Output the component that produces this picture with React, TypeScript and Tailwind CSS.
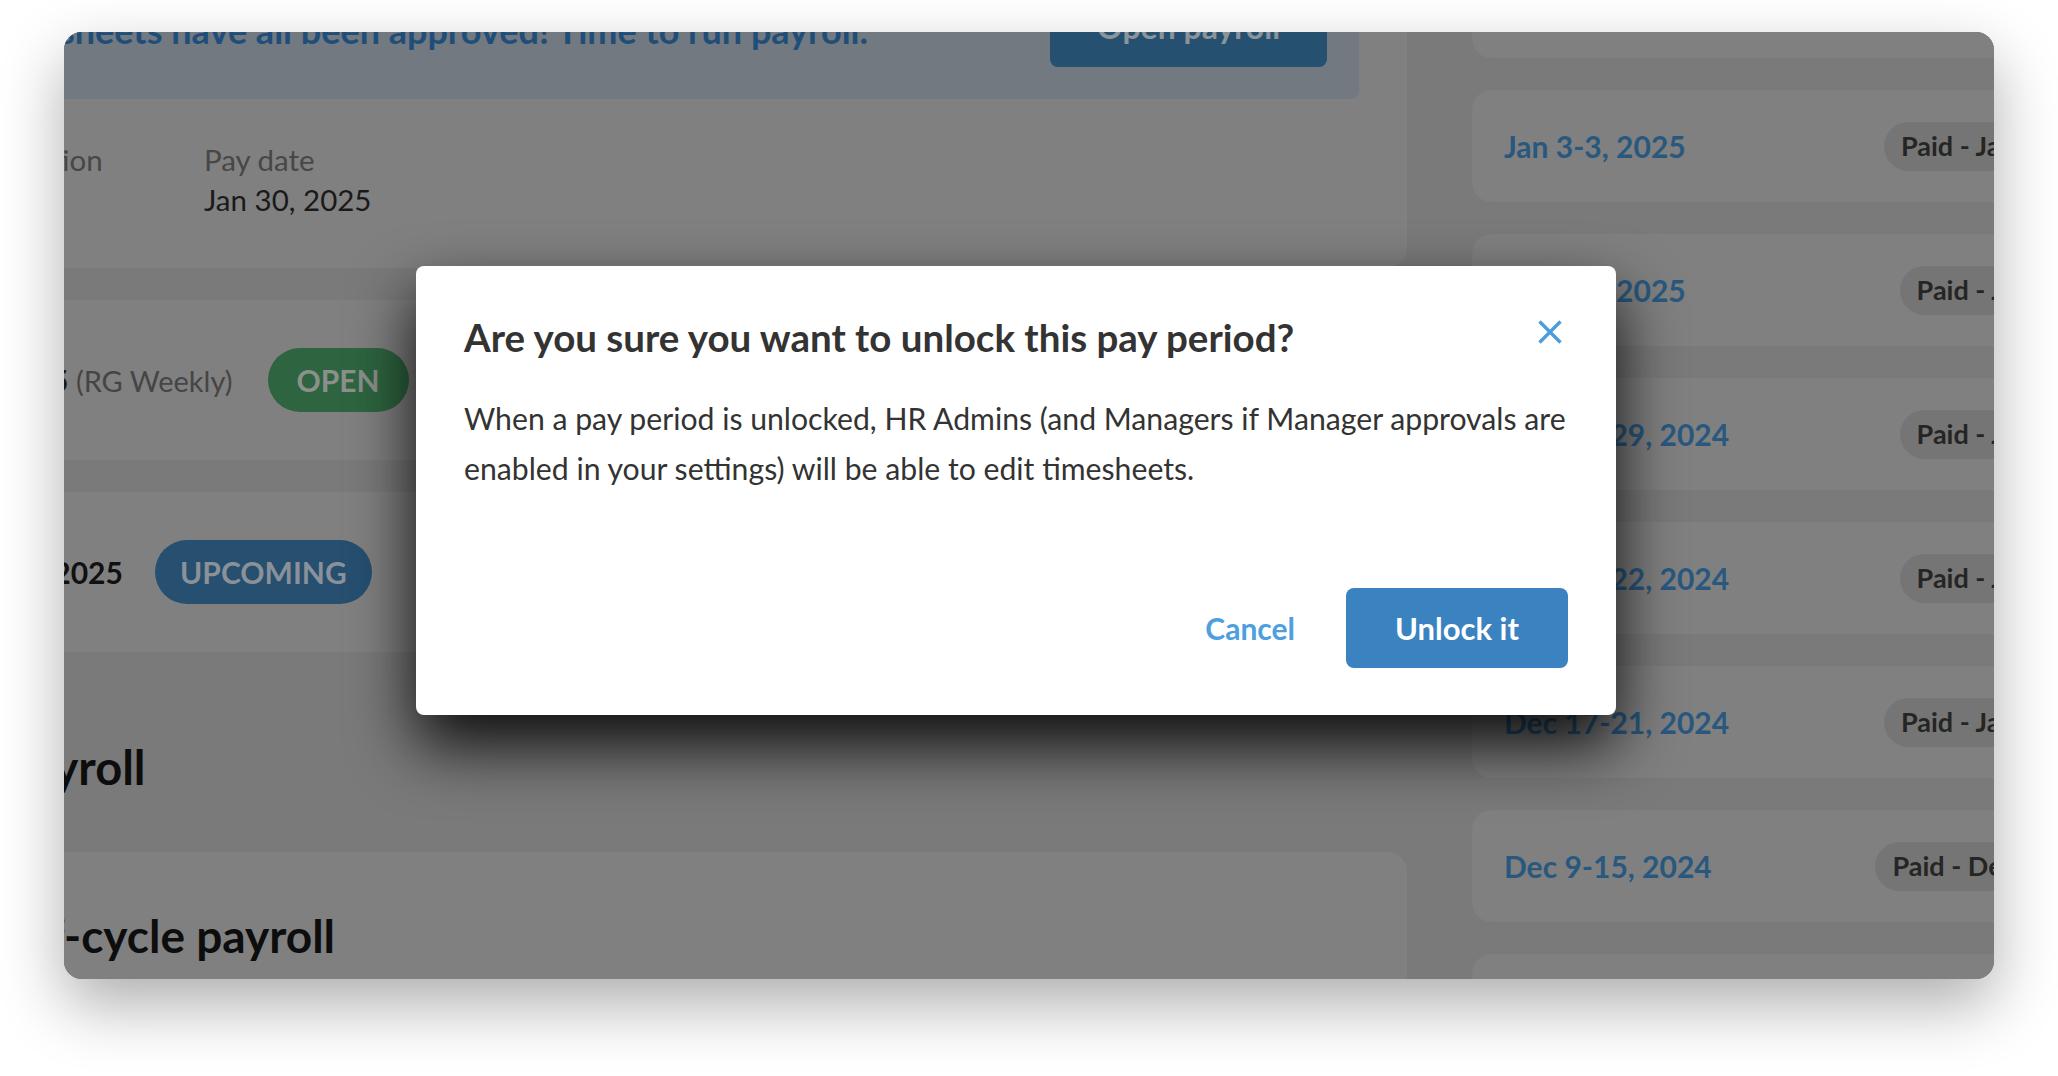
import { useState } from "react";

const sidebar = [
  { range: "Dec 30-31, 2024", paid: "Paid - Jan 6, 2025" },
  { range: "Jan 3-3, 2025", paid: "Paid - Jan 10, 2025" },
  { range: "Jan 1-2, 2025", paid: "Paid - Jan 9, 2025" },
  { range: "Dec 23-29, 2024", paid: "Paid - Jan 3, 2025" },
  { range: "Dec 16-22, 2024", paid: "Paid - Jan 2, 2025" },
  { range: "Dec 17-21, 2024", paid: "Paid - Jan 10, 2025" },
  { range: "Dec 9-15, 2024", paid: "Paid - Dec 20, 2024" },
  { range: "Dec 2-8, 2024", paid: "Paid - Dec 13, 2024" },
];

const CloseIcon = () => (
  <svg width="24" height="24" viewBox="0 0 24 24" fill="none" stroke="currentColor" strokeWidth="3.4">
    <path d="M1.5 1.5 22.5 22.5M22.5 1.5 1.5 22.5" />
  </svg>
);

const App = () => {
  const [open, setOpen] = useState(true);

  return (
    <div className="h-[1076px] w-[2058px] overflow-hidden bg-white pl-[64px] pt-[32px] font-['Lato',sans-serif]">
      {/* window */}
      <div className="relative h-[947px] w-[1930px] overflow-hidden rounded-[18px] bg-[#7a7a7a] shadow-[0_26px_64px_rgba(0,0,0,0.32)]">
        <div className="-ml-[300px] -mt-[125px] flex items-start gap-[65px]">
          {/* main column */}
          <div className="w-[1643px] shrink-0">
            <div className="rounded-[20px] bg-[#808080] p-12">
              <div className="flex h-[144px] items-center justify-between rounded-lg bg-[#737980] pl-[167px] pr-8">
                <p className="mt-[6px] whitespace-nowrap text-[36px] font-bold text-[#1f4e78]">
                  Timesheets have all been approved! Time to run payroll.
                </p>
                <button className="h-[80px] w-[277px] rounded-lg bg-[#26506f] text-[32px] font-bold text-[#8c949b]">
                  Open payroll
                </button>
              </div>
              <div className="mt-[41px] flex pl-[180px] text-[29.5px] leading-[40px]">
                <div className="w-[212px]">
                  <p className="text-[#474747]">Location</p>
                  <p className="text-[#1a1a1a]">HQ</p>
                </div>
                <div>
                  <p className="text-[#474747]">Pay date</p>
                  <p className="text-[#1a1a1a]">Jan 30, 2025</p>
                </div>
              </div>
            </div>

            <div className="mt-8 flex h-[160px] items-center rounded-[20px] bg-[#808080] pl-[88px]">
              <p className="whitespace-nowrap text-[30px]">
                <span className="font-bold text-[#1a1a1a]">Jan 27-31, 2025</span>
                <span className="text-[29px] text-[#454545]"> (RG Weekly)</span>
              </p>
              <span className="ml-[35px] flex h-[64px] w-[141px] items-center justify-center rounded-full bg-[#2e6540] text-[30px] font-bold text-[#8b908c]">
                OPEN
              </span>
            </div>

            <div className="mt-8 flex h-[160px] items-center rounded-[20px] bg-[#808080] pl-[173px]">
              <p className="whitespace-nowrap text-[30px] font-bold text-[#111111]">Feb 3-7, 2025</p>
              <span className="ml-8 flex h-[64px] w-[217px] items-center justify-center rounded-full bg-[#264f70] text-[30px] font-bold text-[#8b9198]">
                UPCOMING
              </span>
            </div>

            <h2 className="mb-[57px] mt-[87px] pl-[238px] text-[47px] font-bold leading-[56px] text-[#0d0d0d]">
              Payroll
            </h2>

            <div className="h-[260px] rounded-[20px] bg-[#808080] pl-[232px] pt-[56px]">
              <h2 className="text-[46px] font-bold leading-[56px] text-[#0d0d0d]">Off-cycle payroll</h2>
            </div>
          </div>

          {/* pay period list */}
          <div className="flex w-[706px] shrink-0 flex-col gap-8 pt-[39px]">
            {sidebar.map((row, i) => (
              <div
                key={i}
                className="flex h-[112px] items-center justify-between rounded-[20px] bg-[#808080] px-8"
              >
                <span className="whitespace-nowrap text-[30px] font-bold text-[#29587f]">{row.range}</span>
                <span className="flex h-[49px] items-center whitespace-nowrap rounded-full bg-[#757575] px-[17px] text-[27px] font-bold text-[#252525]">
                  {row.paid}
                </span>
              </div>
            ))}
          </div>
        </div>

        {/* unlock dialog */}
        {open && (
          <div className="absolute left-[352px] top-[234px] w-[1200px] rounded-lg bg-white px-12 pb-[47px] pt-12 shadow-[0_30px_64px_rgba(0,0,0,0.9)]">
            <div className="flex items-start justify-between gap-4">
              <h2 className="text-[38.5px] font-bold leading-[47px] text-[#333333]">
                Are you sure you want to unlock this pay period?
              </h2>
              <button onClick={() => setOpen(false)} className="mr-[6px] mt-[6px] text-[#4a9ee0]">
                <CloseIcon />
              </button>
            </div>
            <p className="mt-8 whitespace-nowrap text-[30.2px] leading-[50px] text-[#333333]">
              When a pay period is unlocked, HR Admins (and Managers if Manager approvals are
              <br />
              enabled in your settings) will be able to edit timesheets.
            </p>
            <div className="mt-[95px] flex items-center justify-end gap-[51px]">
              <button className="text-[30px] font-bold text-[#4d9fdf]">Cancel</button>
              <button className="flex h-[80px] w-[222px] items-center justify-center rounded-lg bg-[#3b82c0] text-[31px] font-bold text-white">
                Unlock it
              </button>
            </div>
          </div>
        )}
      </div>
    </div>
  );
};

export default App;
